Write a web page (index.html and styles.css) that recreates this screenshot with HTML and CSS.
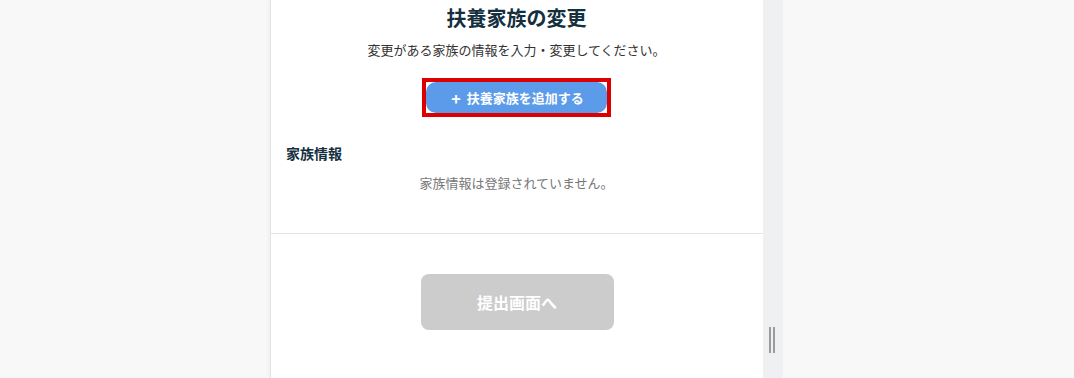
FILE: index.html
```html
<!DOCTYPE html>
<html lang="ja">
<head>
<meta charset="utf-8">
<link rel="stylesheet" href="styles.css">
</head>
<body>
<div class="layout">
  <div class="side"></div>
  <main class="card">
    <section class="top">
      <h1 class="title">扶養家族の変更</h1>
      <p class="lead">変更がある家族の情報を入力・変更してください。</p>
      <div class="highlight">
        <button class="add-btn"><span class="plus">+</span>扶養家族を追加する</button>
      </div>
      <h2 class="section-title">家族情報</h2>
      <p class="empty">家族情報は登録されていません。</p>
    </section>
    <section class="bottom">
      <button class="submit-btn">提出画面へ</button>
    </section>
  </main>
  <div class="strip"><span class="grip"></span></div>
  <div class="side"></div>
</div>
</body>
</html>
```
FILE: styles.css
```css
html, body {
  margin: 0;
  padding: 0;
  height: 100%;
}
body {
  background: #f8f8f8;
  font-family: "Noto Sans CJK JP", "Noto Sans", sans-serif;
  overflow: hidden;
}
.layout {
  display: grid;
  grid-template-columns: 270px 493px 20px 1fr;
  height: 378px;
}
.card {
  background: #ffffff;
  border-left: 1px solid #e3e3e3;
  box-shadow: -2px 0 4px rgba(0,0,0,0.03);
}
.top {
  padding: 4px 16px 40px 15px;
  border-bottom: 1px solid #e4e4e4;
  display: flex;
  flex-direction: column;
}
.title {
  margin: 0;
  font-size: 20px;
  line-height: 28px;
  font-weight: 700;
  color: #14303f;
  text-align: center;
}
.lead {
  margin: 8px 0 0;
  font-size: 13px;
  line-height: 20px;
  color: #333;
  text-align: center;
}
.highlight {
  align-self: center;
  margin-top: 18px;
  border: 4px solid #dc0000;
  background: #fff;
  display: flex;
}
.add-btn {
  width: 181px;
  height: 31px;
  border: none;
  border-radius: 10px;
  background: #5b9be9;
  color: #fff;
  font-family: inherit;
  font-size: 13px;
  font-weight: 700;
  display: flex;
  align-items: center;
  justify-content: center;
  gap: 6px;
  padding: 0 0 0 2px;
}
.plus {
  font-size: 16px;
  font-weight: 700;
  line-height: 1;
}
.section-title {
  margin: 26px 0 0;
  font-size: 14px;
  line-height: 20px;
  font-weight: 700;
  color: #14303f;
}
.empty {
  margin: 10px 0 0;
  font-size: 13px;
  line-height: 20px;
  color: #777;
  text-align: center;
}
.bottom {
  display: flex;
  justify-content: center;
  padding-top: 40px;
}
.submit-btn {
  width: 193px;
  height: 56px;
  border: none;
  border-radius: 8px;
  background: #cccccc;
  color: #fff;
  font-family: inherit;
  font-size: 16px;
  font-weight: 700;
}
.strip {
  background: #eff0f2;
  position: relative;
}
.grip {
  position: absolute;
  left: 6px;
  top: 327px;
  width: 2px;
  height: 26px;
  background: #9a9a9a;
  box-shadow: 4px 0 0 #9a9a9a;
}
```
